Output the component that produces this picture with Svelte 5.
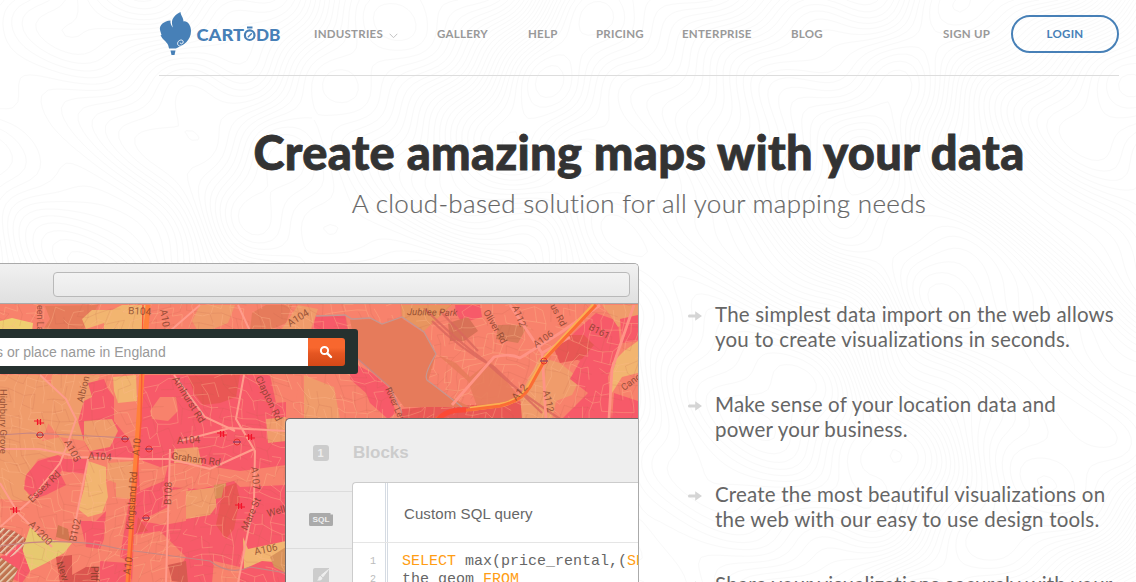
<script>
  const nav = ['GALLERY', 'HELP', 'PRICING', 'ENTERPRISE', 'BLOG'];

  const features = [
    ['The simplest data import on the web allows', 'you to create visualizations in seconds.'],
    ['Make sense of your location data and', 'power your business.'],
    ['Create the most beautiful visualizations on', 'the web with our easy to use design tools.'],
    ['Share your visualizations securely with your', 'friends and colleagues.']
  ];

  // Contour lines of a smooth height field, traced cell by cell.
  function contours(w, h, step) {
    const f = (x, y) =>
      5.2 * Math.sin(x / 87 + 1.1 * Math.sin(y / 93)) +
      2.2 * Math.cos(y / 81 + 1.5 * Math.sin(x / 108 + 1)) +
      1.3 * Math.sin((x + y) / 43 + Math.cos(x / 51)) +
      0.5 * Math.cos((x - 1.4 * y) / 23);
    let d = '';
    for (let y = 0; y < h; y += step) {
      for (let x = 0; x < w; x += step) {
        const c = [[x, y], [x + step, y], [x + step, y + step], [x, y + step]];
        const v = c.map((p) => f(p[0], p[1]));
        const lo = Math.min(...v);
        const hi = Math.max(...v);
        for (let l = Math.ceil(lo / 0.5) * 0.5; l < hi; l += 0.5) {
          const pts = [];
          for (let i = 0; i < 4; i++) {
            const j = (i + 1) % 4;
            if (v[i] < l !== v[j] < l) {
              const t = (l - v[i]) / (v[j] - v[i]);
              pts.push((c[i][0] + t * (c[j][0] - c[i][0])).toFixed(1) + ' ' + (c[i][1] + t * (c[j][1] - c[i][1])).toFixed(1));
            }
          }
          if (pts.length >= 2) d += 'M' + pts[0] + 'L' + pts[1];
        }
      }
    }
    return d;
  }
  const topo = contours(1136, 582, 6);

  // Small streets: a bent, jittered lattice with gaps.
  function streets(seed, gap, keep) {
    let s = seed;
    const rnd = () => {
      s = (s * 16807) % 2147483647;
      return s / 2147483647;
    };
    const cols = Math.ceil(680 / gap);
    const rows = Math.ceil(320 / gap);
    const p = [];
    for (let r = 0; r <= rows; r++) {
      p.push([]);
      for (let c = 0; c <= cols; c++) {
        const x = c * gap - 20;
        const y = 285 + r * gap;
        p[r].push([
          (x + rnd() * gap * 0.6 + 12 * Math.sin(y / 38 + x / 90)).toFixed(1),
          (y + rnd() * gap * 0.6 + 14 * Math.sin(x / 44)).toFixed(1)
        ]);
      }
    }
    let d = '';
    for (let r = 0; r < rows; r++)
      for (let c = 0; c < cols; c++) {
        if (rnd() < keep) d += `M${p[r][c]}L${p[r][c + 1]}`;
        if (rnd() < keep) d += `M${p[r][c]}L${p[r + 1][c]}`;
      }
    return d;
  }
  const lightStreets = streets(77, 10, 0.52);
  const darkStreets = streets(1234, 12, 0.5);

  const areas = [
    ['#f09c6b', '0,374 40,374 52,384 50,418 42,440 60,436 70,452 38,458 24,480 30,500 0,498'],
    ['#f09c6b', '52,374 100,374 92,396 80,418 85,440 60,436 46,420'],
    ['#e67b5b', '45,305 98,304 90,320 82,330 42,330 50,318'],
    ['#efd070', '0,320 12,317 33,322 32,330 0,330'],
    ['#f2b570', '82,318 92,309 112,309 122,304 146,304 144,330 104,330 104,322 86,328'],
    ['#f09c6b', '192,320 200,304 235,304 228,322 208,330 198,330'],
    ['#e67b5b', '252,312 266,304 292,304 286,322 270,329 250,329'],
    ['#f09c6b', '286,322 298,304 318,308 310,330 280,330'],
    ['#f75a69', '316,315 345,314 348,329 312,329'],
    ['#f2b570', '113,376 136,374 137,400 118,402 114,390'],
    ['#f75a69', '88,382 104,378 108,388 114,396 114,420 130,440 136,457 92,456 84,440 78,420 84,400 92,396'],
    ['#f09c6b', '84,420 112,418 118,430 110,446 90,450 84,440'],
    ['#f75a69', '142,374 286,374 286,582 128,582 128,560 120,556 134,470 140,420'],
    ['#f8826c', '150,410 160,396 176,396 178,410 168,420 152,418'],
    ['#e95754', '188,375 240,374 236,396 220,402 203,404 194,392'],
    ['#f8826c', '270,374 300,374 296,400 276,402'],
    ['#f75a69', '38,460 58,454 68,460 60,472 66,484 46,494 34,498 24,488 26,474'],
    ['#f75a69', '60,458 88,458 86,474 62,470'],
    ['#f2b570', '88,460 106,466 106,480 108,496 102,512 88,516 78,508 84,488'],
    ['#f09c6b', '108,462 134,460 130,498 116,496 116,482 106,478'],
    ['#f75a69', '80,520 96,520 106,510 104,538 100,548 86,546'],
    ['#f8826c', '138,458 160,466 168,464 164,480 140,490'],
    ['#f8826c', '170,462 214,466 240,470 286,464 286,484 240,486 234,480 200,488 170,486'],
    ['#f09c6b', '174,448 198,446 202,464 174,462'],
    ['#f8826c', '168,490 188,486 186,520 164,524 140,520 168,506'],
    ['#f09c6b', '186,490 216,486 216,506 210,514 186,518'],
    ['#d88c58', '214,484 226,482 226,496 215,498'],
    ['#e95754', '224,486 236,482 240,498 234,528 226,538 216,524 220,504'],
    ['#e95754', '138,516 148,530 136,532'],
    ['#f8826c', '134,534 160,530 186,556 178,570 188,582 132,582'],
    ['#d75b50', '168,564 186,560 188,582 172,580'],
    ['#f8826c', '214,560 240,566 240,582 212,582'],
    ['#f2b570', '243,536 248,548 286,540 286,562 262,560 244,568'],
    ['#d9935b', '270,556 286,546 286,572 274,566'],
    ['#f09c6b', '266,418 286,416 286,440 268,442'],
    ['#e7c970', '30,526 48,538 72,542 64,552 46,562 30,570 22,550'],
    ['#cf7750', '58,524 68,528 70,540 56,536'],
    ['#c5654e', '0,526 14,530 26,538 22,550 10,556 0,552'],
    ['#f75a69', '0,556 20,542 30,570 22,582 8,576 0,566'],
    ['#c07450', '0,556 18,568 12,582 0,582'],
    ['#dc554f', '56,556 72,554 72,574 86,566 98,566 98,582 60,582'],
    ['#f75a69', '100,560 128,562 128,582 100,582'],
    ['#e8955f', '401,304 452,304 424,330 402,316'],
    ['#f75a69', '455,304 480,304 482,316 462,322 456,312'],
    ['#f75a69', '350,360 372,372 388,386 396,412 388,418 370,402 366,392 350,378'],
    ['#f09c6b', '304,374 334,386 340,418 304,418'],
    ['#d87157', '448,322 468,316 478,330 464,340 450,340'],
    ['#d87a59', '498,324 528,324 518,342 496,338'],
    ['#e95754', '402,408 452,404 448,418 400,418'],
    ['#e95754', '448,406 524,400 524,418 448,418'],
    ['#f09c6b', '520,394 540,356 560,362 580,378 572,394 556,400 552,418 522,418'],
    ['#f75a69', '596,312 618,320 620,342 608,376 612,418 562,418 588,392 570,378 580,360 556,350 576,330'],
    ['#e95754', '566,334 584,334 594,344 582,358 560,362 554,348'],
    ['#f09c6b', '602,304 638,304 638,318 618,326 610,314'],
    ['#f75a69', '620,318 638,314 638,340 622,342'],
    ['#f2b570', '624,350 638,340 638,372 622,376 612,392 612,362'],
    ['#f75a69', '614,392 638,400 638,418 612,418']
  ];

  const labels = [
    ['B104', 128, 313, 3, 10], ['A10', 160, 309, 80, 10], ['A104', 290, 326, -32, 10], ['een La', 37, 304, 90, 9],
    ['Jubilee Park', 407, 314, 1, 9.5], ['Oliver Rd', 483, 311, 60, 9.5], ['A112', 512, 306, 68, 9.5], ['us Rd', 550, 305, 62, 9.5],
    ['A106', 536, 347, -35, 9.5], ['B161', 588, 328, 28, 9.5], ['A12', 516, 400, -48, 10], ['A112', 543, 390, 78, 9.5],
    ['River Lea', 385, 388, 66, 9], ['Cano', 624, 390, -36, 9.5], ['Albion', 83, 402, -76, 9.5], ['Amhurst Rd', 172, 378, 58, 10],
    ['Clapton Rd', 255, 377, 64, 10], ['Highbury Grove', 0, 388, 90, 9.5], ['A104', 177, 443, -3, 10], ['A105', 64, 441, 62, 10],
    ['A104', 88, 458, 4, 10], ['A10', 139, 455, -84, 10], ['Graham Rd', 171, 458, 8, 10], ['Essex Rd', 32, 502, -44, 10],
    ['Kingsland Rd', 133, 529, -86, 10], ['B108', 171, 504, -88, 10], ['A107', 251, 466, 84, 10], ['Mare St', 247, 530, -66, 10],
    ['Well', 268, 516, -16, 10], ['A1200', 28, 524, 46, 10], ['B102', 76, 541, -78, 10], ['A106', 255, 554, -12, 10],
    ['A10', 130, 574, -82, 10], ['New', 56, 562, 70, 10], ['Pitfi', 91, 565, 90, 10]
  ];

  const rails = [[39, 421], [222, 433], [250, 436], [15, 509], [240, 505]];
  const tubes = [[40, 434], [125, 438], [149, 448], [237, 441], [146, 517], [544, 360]];
</script>

<div class="page">
  <svg class="topo" width="1136" height="582" viewBox="0 0 1136 582" aria-hidden="true"><path d={topo} /></svg>

  <header>
    <a class="logo" href="#top" aria-label="CartoDB">
      <svg width="126" height="46" viewBox="159 10 126 46">
        <g fill="#4780b7">
          <path d="M160 30C159 25 164 21 170.500 20.500C170 23 171.500 26 173 27.500C171.500 23 171.500 20 174 17C176 14 178 13.500 180.500 12C180.500 15 183.500 17.500 183.500 21.500C187 20.500 191 25 191 31C191 36 189 39 186.500 42C183 46 178 47 176 48.500H169C168.500 44 166 42 164 40C161.500 37.500 161.500 36.500 160.500 35.500L161.500 35Z" />
          <path d="M170.500 50.500H175.500L174.500 55H171.500Z" />
        </g>
        <path d="M185.500 43.500C182 47.500 177.200 46.500 177.600 43.200C178 39.700 183.300 38.800 183.200 42C183.100 44.200 180 44.500 180.300 42.600" fill="none" stroke="#fff" stroke-width=".9" />
        <text x="196.500" y="41" textLength="47.500" lengthAdjust="spacingAndGlyphs">CART</text>
        <text x="256" y="41" textLength="24.500" lengthAdjust="spacingAndGlyphs">DB</text>
        <g fill="none" stroke="#4780b7">
          <ellipse cx="249.700" cy="35.200" rx="4.800" ry="4.800" stroke-width="2.200" />
          <path d="M247 27.500H252.500" stroke-width="2" />
          <path d="M247.800 37.200L251.800 33.200" stroke-width="1.400" />
        </g>
      </svg>
    </a>
    <nav>
      <a href="#industries">INDUSTRIES
        <svg width="9" height="6" viewBox="0 0 9 6"><path d="M.7.800L4.500 4.700L8.300.800" fill="none" stroke="#c2c2c2" /></svg>
      </a>
      {#each nav as item}<a href="#{item.toLowerCase()}">{item}</a>{/each}
    </nav>
    <a class="signup" href="#signup">SIGN UP</a>
    <a class="login" href="#login">LOGIN</a>
  </header>

  <section class="hero">
    <h1>Create amazing maps with your data</h1>
    <p>A cloud-based solution for all your mapping needs</p>
  </section>

  <main>
    <div class="browser">
      <div class="chrome"><div class="address"></div></div>
      <div class="view">
        <svg class="map" width="638" height="279" viewBox="0 303 638 279" aria-hidden="true">
          <defs>
            <pattern id="hatch" width="5" height="5" patternUnits="userSpaceOnUse" patternTransform="rotate(45)">
              <rect width="1.500" height="5" fill="#ecd9bd" />
            </pattern>
          </defs>
          <rect y="303" width="638" height="279" fill="#f8826c" />
          {#each areas as [fill, points]}<polygon {fill} {points} />{/each}
          <path d={darkStreets} class="dark" />
          <path d={lightStreets} class="light" />
          <path d="M0 526L14 530L26 538L22 550L10 556L0 552ZM0 556L18 568L12 582H0Z" fill="url(#hatch)" />
          <polygon points="350,319 372,318 382,323 400,316 424,332 436,353 428,380 446,394 470,406 404,406 388,384 358,358" fill="#e67b5b" />
          <polygon points="438,354 456,362 470,376 490,360 516,392 512,403 478,408 468,380" fill="#e67b5b" opacity=".85" />
          <g fill="none">
            <path d="M316 315L345 314L352 318L370 317L382 323L402 316L424 331L436 353Q422 376 428 380T462 406" stroke="#c49791" stroke-width="1.300" />
            <path d="M358 358L390 386L402 412M0 434L30 432L130 437M0 545Q70 535 120 548L210 560Q230 575 250 566L286 572" stroke="#c78683" stroke-width="1.200" />
            <path d="M425 308Q455 338 485 360Q510 385 560 418M432 320Q460 348 494 366L542 412M440 310L478 350" stroke="#d9675d" stroke-width="2.200" opacity=".8" />
            <path d="M0 448L40 448L80 456L134 458L170 458L210 468L254 448M40 374L66 398L76 418L68 442L60 462L30 500M0 482L18 512L52 546M88 458L76 518L72 540M170 448L166 582M244 374L236 418L255 450L254 500L238 582M238 304L250 330M200 304L170 330M174 374L205 416L235 430M300 418L286 430L230 427L180 440M30 500L16 512L0 526" stroke="#ff9c8c" stroke-width="2" />
            <path d="M452 404L494 356Q510 352 520 357L560 332L600 304M510 304L542 352L544 382L546 418M634 304L612 368L609 418M542 352L570 336" stroke="#ff9486" stroke-width="2.800" />
            <path d="M148 304L142 374L139 415L133 500L128 582" stroke="#ff813b" stroke-width="5" />
            <path d="M143 304L141 420L129 582" stroke="#fa5b37" stroke-width="1.500" />
            <path d="M594 304L545 357L530 384Q522 400 500 404L470 408" stroke="#fbb052" stroke-width="4.500" />
            <path d="M596 304L546 357L530 386Q522 400 500 405L468 409Q448 408 436 418" stroke="#fb6c35" stroke-width="3" />
            <path d="M438 419Q446 408 466 409" stroke="#fb4936" stroke-width="5" />
          </g>
          {#each labels as [t, x, y, r, size]}
            <text transform="translate({x} {y}) rotate({r})" font-size={size} font-style={t === 'Jubilee Park' ? 'italic' : 'normal'}>{t}</text>
          {/each}
          {#each rails as [x, y]}
            <path d="M{x - 5} {y - 1}h7M{x - 2} {y + 1}h7M{x - 1.500} {y - 3}v6M{x + 1.500} {y - 3}v6" stroke="#f3142a" stroke-width="1.200" />
          {/each}
          {#each tubes as [x, y]}
            <circle cx={x} cy={y} r="3" fill="none" stroke="#e5322f" />
            <path d="M{x - 4} {y}h8" stroke="#6b3c70" />
          {/each}
        </svg>

        <div class="search">
          <div class="query">s or place name in England</div>
          <div class="go">
            <svg width="14" height="14" viewBox="0 0 14 14"><circle cx="5.500" cy="5.500" r="3.600" fill="none" stroke="#fff" stroke-width="2" /><path d="M8.300 8.300L12 12" stroke="#fff" stroke-width="2.400" stroke-linecap="round" /></svg>
          </div>
        </div>

        <div class="panel">
          <div class="tabs">
            <div class="tab first"><span class="num">1</span></div>
            <div class="tab second">
              <svg width="24" height="13" viewBox="0 0 24 13"><path d="M1.500 0H21.500V1.500H24V11.500Q24 13 22.500 13H1.500Q0 13 0 11.500V1.500Q0 0 1.500 0Z" fill="#aaa" /><text x="3.500" y="9.300" textLength="17" lengthAdjust="spacingAndGlyphs">SQL</text></svg>
            </div>
            <div class="tab third">
              <svg width="16" height="16" viewBox="0 0 16 16"><path d="M2 0H16V14Q16 16 14 16H2Q0 16 0 14V2Q0 0 2 0Z" fill="#ccc" /><path d="M15.500 1.500L10 8.800L8.300 7.200Z" fill="#eee" stroke="#eee" /><path d="M7.500 8L9.500 10Q9 13 4 12.500Q6 11 5.500 9.500Q6 8 7.500 8Z" fill="#eee" /></svg>
            </div>
          </div>
          <div class="body">
            <h2>Blocks</h2>
            <div class="editor">
              <div class="title"><span>Custom SQL query</span></div>
              <div class="code">
                <div class="line"><i>1</i><code><b>SELECT</b> max(price_rental,(<b>SE</b></code></div>
                <div class="line"><i>2</i><code>the_geom <b>FROM</b></code></div>
              </div>
            </div>
          </div>
        </div>
      </div>
    </div>

    <ul>
      {#each features as [a, b]}
        <li>
          <svg width="14" height="10" viewBox="0 0 14 10"><path d="M1.200 3.500H7.200V.300L14 5L7.200 9.700V6.500H1.200Q0 6.500 0 5T1.200 3.500Z" fill="#d5d5d5" /></svg>
          <p><span>{a}</span><span>{b}</span></p>
        </li>
      {/each}
    </ul>
  </main>
</div>

<style>
  :global(body) { margin: 0; background: #fff; }
  .page { position: relative; width: 1136px; height: 582px; overflow: hidden; font-family: Lato, sans-serif; font-variant-ligatures: none; isolation: isolate; }
  .topo { position: absolute; inset: 0; z-index: -1; }
  .topo path { fill: none; stroke: #f9f9f9; stroke-width: 1; }
  a { color: #999; text-decoration: none; }

  header { box-sizing: border-box; display: flex; width: 960px; height: 76px; margin-left: 159px; padding-bottom: 7px; border-bottom: 1px solid #ddd; align-items: center; font-size: 11.5px; font-weight: 700; letter-spacing: .25px; white-space: nowrap; }
  .logo { width: 155px; height: 46px; margin-top: -3px; letter-spacing: 0; }
  .logo svg { display: block; }
  .logo text { font: 900 17px Lato, sans-serif; fill: #4780b7; }
  nav { display: grid; grid-template-columns: 123px 91px 68px 86px 109px 152px; margin-top: -1px; }
  nav svg { margin-left: 3px; vertical-align: -1px; }
  .signup { width: 68px; margin-top: -1px; }
  .login { box-sizing: border-box; width: 108px; height: 38px; border: 2px solid #4780b7; border-radius: 19px; color: #4780b7; line-height: 33px; text-align: center; }

  .hero { width: 960px; height: 187px; margin-left: 159px; text-align: center; white-space: nowrap; }
  h1 { margin: 0; padding-top: 46px; color: #333; font-size: 47px; line-height: 60px; font-weight: 900; letter-spacing: .33px; -webkit-text-stroke: .8px #333; }
  .hero p { margin: 0; padding-top: 3px; color: #666; font-size: 26px; line-height: 36px; font-weight: 300; letter-spacing: .32px; -webkit-text-stroke: .2px #666; }

  main { display: flex; height: 319px; }
  .hero + main { margin-top: 0; }
  .browser { box-sizing: border-box; width: 639px; height: 319px; border: 1px solid #aaa; border-width: 1px 1px 0 0; border-radius: 0 5px 0 0; overflow: hidden; }
  .chrome { box-sizing: border-box; height: 40px; padding: 8px 8px 0 53px; background: linear-gradient(#f1f1f1, #e0e0e0); border-bottom: 1px solid #aaa; }
  .address { box-sizing: border-box; height: 25px; border: 1px solid #b9b9b9; border-radius: 4px; background: linear-gradient(#f3f3f3, #eaeaea); }
  .view { position: relative; height: 279px; overflow: hidden; }
  .map { display: block; }
  .map text { font-family: Roboto, sans-serif; fill: #7b3b27; opacity: .75; }
  .dark { fill: none; stroke: #bd624f; stroke-width: .7; opacity: .22; }
  .light { fill: none; stroke: #ffb98c; stroke-width: .9; opacity: .4; }

  .search { position: absolute; left: 0; top: 25px; box-sizing: border-box; display: flex; width: 358px; height: 45px; padding: 9px 13px 8px 0; border-radius: 0 3px 3px 0; background: #25312f; }
  .query { width: 308px; background: #fff; color: #999; font: 14px/28px "Liberation Sans", sans-serif; text-indent: -4px; white-space: nowrap; }
  .go { display: grid; width: 37px; box-sizing: border-box; padding-right: 2px; place-items: center; border-radius: 0 3px 3px 0; background: linear-gradient(#f8672e 0 35%, #e55622 55%, #d34817); }

  .panel { position: absolute; left: 285px; top: 114px; box-sizing: border-box; display: flex; width: 353px; height: 180px; border: 1px solid #736a68; border-right: 0; border-radius: 5px 0 0 0; background: #eee; }
  .tabs { flex: none; width: 66px; }
  .tab { box-sizing: border-box; display: flex; justify-content: center; padding-left: 3px; border-bottom: 1px solid #dcdcdc; }
  .first { height: 73px; padding-top: 26px; }
  .second { height: 57px; padding-top: 21px; }
  .third { height: 60px; padding-top: 19px; }
  .num { width: 16px; height: 16px; border-radius: 3px; background: #ccc; color: #eee; font: bold 11px/16px "Liberation Sans", sans-serif; text-align: center; }
  .tab text { font: bold 8px "Liberation Sans", sans-serif; fill: #eee; }
  .body { flex: 1; min-width: 0; }
  h2 { margin: 0; height: 63px; color: #ccc; font: bold 17px/67px "Liberation Sans", sans-serif; text-indent: 1px; }
  .editor { height: 130px; border: 1px solid #ccc; border-right: 0; border-radius: 4px 0 0 0; overflow: hidden; background: linear-gradient(90deg, transparent 32px, #d5dbe3 32px 33px, transparent 33px 34px, #d5dbe3 34px 35px, transparent 35px) #fff; }
  .title { height: 59px; border-bottom: 1px solid #e5e5e5; padding-left: 51px; color: #666; font: 15px/62px "Liberation Sans", sans-serif; letter-spacing: .1px; white-space: nowrap; }
  .code { padding-top: 10px; }
  .line { display: flex; height: 18px; font: 15px/18px "Liberation Mono", monospace; color: #666; white-space: pre; }
  .line i { flex: none; width: 23px; margin-right: 26px; color: #bbb; font-style: normal; font-size: 10px; text-align: right; }
  .line code { flex: none; font: inherit; }
  .line b { font-weight: 400; color: #ff9d14; }

  ul { width: 430px; margin: 0; padding: 39px 0 0 49px; list-style: none; }
  li { display: flex; height: 90px; gap: 13px; }
  li svg { flex: none; margin-top: 9px; }
  li p { margin: 0; color: #666; font-size: 20.5px; line-height: 25px; letter-spacing: .2px; white-space: nowrap; }
  li span { display: block; }
</style>
